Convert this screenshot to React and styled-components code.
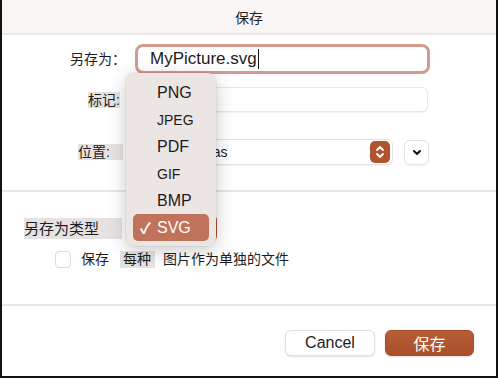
import React from 'react';
import styled, { createGlobalStyle } from 'styled-components';

//----------------Styling-------------------------//

const Global = createGlobalStyle`
  body {
    margin: 0;
    background: #fff;
    font-family: "Liberation Sans", "Noto Sans CJK SC", sans-serif;
  }
`

const Window = styled.div`
  position: relative;
  width: 498px;
  height: 378px;
  box-sizing: border-box;
  border: 2px solid #111;
  border-top: none;
  background: #fff;
  display: flex;
  flex-direction: column;
  overflow: hidden;
  color: #1c1c1c;
`

const TitleBar = styled.div`
  height: 33px;
  flex-shrink: 0;
  background: #f8f5f4;
  border-bottom: 2px solid #e9e7e7;
  display: flex;
  align-items: center;
  justify-content: center;
  font-size: 14px;
  color: #222;
`

const Row = styled.div`
  display: flex;
  align-items: center;
  height: ${p => p.h}px;
  margin-top: ${p => p.mt}px;
  padding-left: ${p => p.pl || 0}px;
  flex-shrink: 0;
`

const LabelCol = styled.div`
  width: 124px;
  margin-right: 9px;
  display: flex;
  justify-content: flex-end;
`

const Label = styled.span`
  font-size: ${p => p.size || 14}px;
  line-height: ${p => p.lh || 16}px;
  margin-right: ${p => p.mr || 0}px;
  padding-right: ${p => p.pr || 0}px;
  background: ${p => (p.hl ? '#e6e2e1' : 'transparent')};
  white-space: nowrap;
`

const FocusInput = styled.div`
  width: 295px;
  height: 30px;
  box-sizing: border-box;
  border: 3px solid #d49a8d;
  border-radius: 8px;
  display: flex;
  align-items: center;
  padding-left: 12px;
  font-size: 17px;
`

const Caret = styled.span`
  width: 1px;
  height: 20px;
  background: #111;
  margin-left: 1px;
`

const TextInput = styled.div`
  width: ${p => p.w}px;
  height: 25px;
  box-sizing: border-box;
  border: 1px solid #e6e6e6;
  border-radius: 6px;
  box-shadow: 0 1px 1px rgba(0, 0, 0, 0.06);
  background: #fff;
`

const Select = styled.div`
  width: 258px;
  height: 26px;
  box-sizing: border-box;
  border: 1px solid #e4e4e4;
  border-radius: 6px;
  box-shadow: 0 1px 1px rgba(0, 0, 0, 0.06);
  display: flex;
  align-items: center;
  justify-content: space-between;
  padding: 0 2px 0 44px;
  font-size: 14px;
  margin-right: 11px;
`

const Stepper = styled.div`
  width: 20px;
  height: 22px;
  border-radius: 5px;
  background: #b0532e;
  display: flex;
  align-items: center;
  justify-content: center;
`

const SquareButton = styled.div`
  width: 25px;
  height: 25px;
  box-sizing: border-box;
  border: 1px solid #e4e4e4;
  border-radius: 6px;
  box-shadow: 0 1px 2px rgba(0, 0, 0, 0.08);
  display: flex;
  align-items: center;
  justify-content: center;
`

const Divider = styled.div`
  height: 2px;
  flex-shrink: 0;
  background: #e6e6e6;
  margin-top: ${p => p.mt}px;
`

const TypeSelect = styled.div`
  width: 88px;
  height: 28px;
  margin-left: 7px;
  border-radius: 6px;
  background: #b0532e;
`

const Checkbox = styled.div`
  width: 16px;
  height: 17px;
  box-sizing: border-box;
  border: 1px solid #dcdcdc;
  border-radius: 4px;
  background: #fff;
  margin-right: 10px;
`

const Footer = styled.div`
  display: flex;
  justify-content: flex-end;
  gap: 10px;
  padding-right: 22px;
  margin-top: 24px;
`

const Button = styled.div`
  width: ${p => p.w}px;
  height: 26px;
  box-sizing: border-box;
  border-radius: 6px;
  display: flex;
  align-items: center;
  justify-content: center;
  font-size: 16px;
  color: ${p => (p.primary ? '#fff' : '#1c1c1c')};
  background: ${p => (p.primary ? 'linear-gradient(#b75d37, #a9502b)' : '#fff')};
  border: 1px solid ${p => (p.primary ? '#a54d29' : '#e0e0e0')};
  box-shadow: 0 1px 2px rgba(0, 0, 0, 0.12);
`

const Popup = styled.div`
  position: absolute;
  left: 124px;
  top: 73px;
  width: 90px;
  height: 173px;
  box-sizing: border-box;
  padding: 6px 7px 5px;
  background: #ebe5e4;
  border-radius: 8px;
  box-shadow: 0 4px 18px rgba(0, 0, 0, 0.22), 0 0 0 1px rgba(0, 0, 0, 0.04);
  display: flex;
  flex-direction: column;
`

const Item = styled.div`
  height: 27px;
  flex-shrink: 0;
  display: flex;
  align-items: center;
  padding-left: ${p => (p.active ? 7 : 24)}px;
  border-radius: 5px;
  font-size: ${p => p.size || 16}px;
  color: ${p => (p.active ? '#fff' : '#1c1c1c')};
  background: ${p => (p.active ? '#c0735a' : 'transparent')};
`

const Check = styled.span`
  width: 17px;
  font-size: 15px;
  font-weight: bold;
`

//-------------Component Function-----------------//

const formats = [
  { name: 'PNG' },
  { name: 'JPEG', size: 14 },
  { name: 'PDF' },
  { name: 'GIF', size: 14 },
  { name: 'BMP' },
  { name: 'SVG', active: true },
]

const App = () => {
  return (
    <Window>
      <Global />
      <TitleBar>保存</TitleBar>

      <Row h={30} mt={9}>
        <LabelCol><Label>另存为：</Label></LabelCol>
        <FocusInput>MyPicture.svg<Caret /></FocusInput>
      </Row>

      <Row h={25} mt={13}>
        <LabelCol><Label hl mr={6}>标记:</Label></LabelCol>
        <TextInput w={293} />
      </Row>

      <Row h={26} mt={27}>
        <LabelCol><Label hl mr={3} pr={13}>位置:</Label></LabelCol>
        <Select>
          <span>Canvas</span>
          <Stepper>
            <svg width="10" height="14" viewBox="0 0 10 14" fill="none" stroke="#fff" strokeWidth="1.8" strokeLinecap="round" strokeLinejoin="round">
              <path d="M2 5 L5 2 L8 5" />
              <path d="M2 9 L5 12 L8 9" />
            </svg>
          </Stepper>
        </Select>
        <SquareButton>
          <svg width="10" height="7" viewBox="0 0 10 7" fill="none" stroke="#111" strokeWidth="2" strokeLinecap="round" strokeLinejoin="round">
            <path d="M2 2 L5 5 L8 2" />
          </svg>
        </SquareButton>
      </Row>

      <Divider mt={25} />

      <Row h={28} mt={22} pl={22}>
        <Label hl size={15} lh={21} pr={23}>另存为类型</Label>
        <TypeSelect />
      </Row>

      <Row h={18} mt={8} pl={53}>
        <Checkbox />
        <Label>保存</Label>
        <Label hl lh={17} pr={4} style={{ marginLeft: 11, paddingLeft: 3 }}>每种</Label>
        <Label style={{ marginLeft: 8 }}>图片作为单独的文件</Label>
      </Row>

      <Divider mt={36} />

      <Footer>
        <Button w={90}>Cancel</Button>
        <Button w={89} primary>保存</Button>
      </Footer>

      <Popup>
        {formats.map(f => (
          <Item key={f.name} active={f.active} size={f.size}>
            {f.active && <Check>✓</Check>}
            {f.name}
          </Item>
        ))}
      </Popup>
    </Window>
  )
}

export default App
